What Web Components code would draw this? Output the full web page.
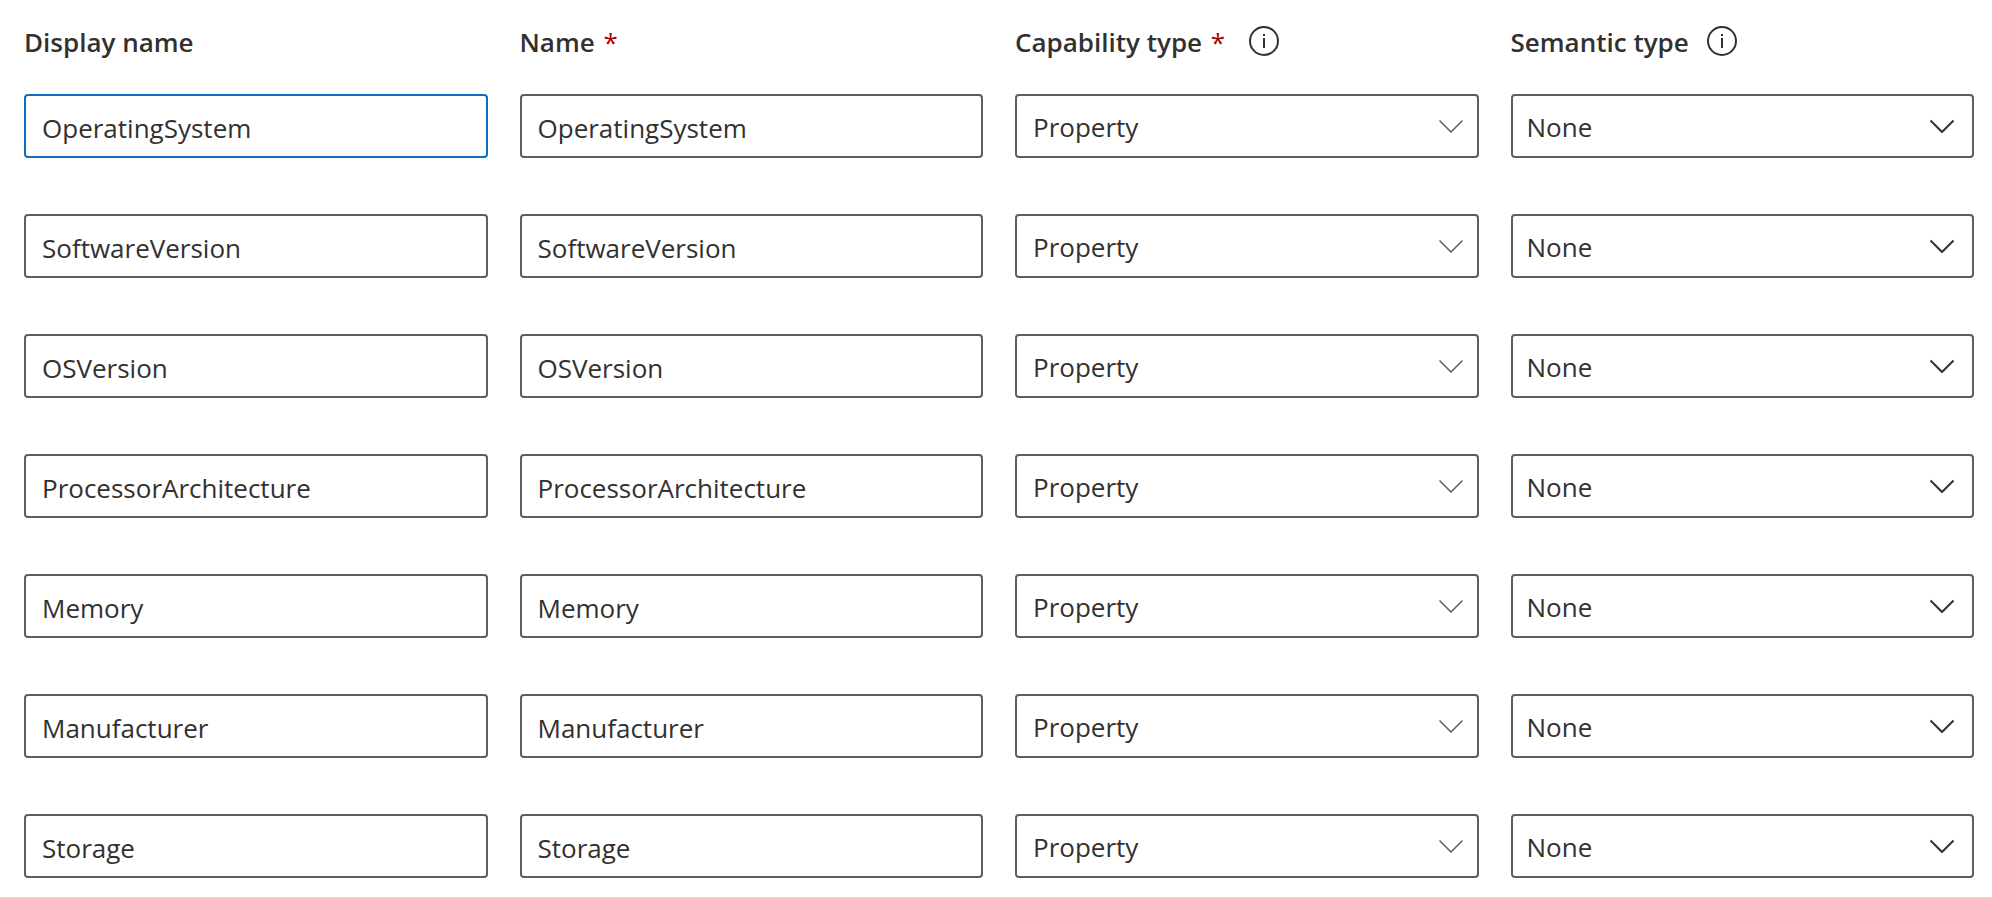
<!DOCTYPE html>
<html lang="en">
<head>
<meta charset="utf-8">
<title>Capabilities</title>
<style>
body { margin: 0; background: #fff; color: #323130; font-family: "Open Sans", "Noto Sans", sans-serif; font-size: 26px; line-height: 40px; }
</style>
</head>
<body>
<capability-list></capability-list>

<template id="heading-template">
<style>
:host { display: flex; align-items: center; gap: 18px; height: 42px; margin-bottom: 32px; white-space: nowrap; }
.text { padding-top: 2px; font-weight: 600; }
.star { display: none; padding: 0 6px 0 2px; color: #a80000; font-weight: 400; }
:host([required]) .star { display: inline; }
button { display: none; flex: none; width: 30px; height: 30px; padding: 0; border: 0; background: none; color: inherit; }
:host([info]) button { display: block; }
svg { display: block; }
</style>
<span class="text"><slot></slot><span class="star"> *</span></span>
<button type="button" aria-label="More information">
<svg width="30" height="30" viewBox="0 0 30 30" fill="none" stroke="currentColor" stroke-width="2"><circle cx="15" cy="15" r="14"/><path d="M15 12v10M15 8v2"/></svg>
</button>
</template>

<template id="text-template">
<style>
:host { display: block; min-width: 0; }
input { display: block; box-sizing: border-box; width: 100%; height: 64px; margin: 0; padding: 4px 16px 0; border: 2px solid #605e5c; border-radius: 4px; outline: none; background: #fff; color: inherit; font: inherit; }
:host([active]) input { border-color: #106ebe; }
</style>
<label><slot></slot><input type="text" spellcheck="false"></label>
</template>

<template id="select-template">
<style>
:host { display: block; min-width: 0; }
.box { display: grid; align-items: center; }
select, svg { grid-area: 1 / 1; }
select { appearance: none; box-sizing: border-box; width: 100%; height: 64px; margin: 0; padding: 2px 56px 0 16px; border: 2px solid #605e5c; border-radius: 4px; background: #fff; color: inherit; font: inherit; }
svg { justify-self: end; margin-right: 15px; pointer-events: none; color: #605e5c; }
:host([strong]) select { padding-left: 14px; }
:host([strong]) svg { margin-right: 19px; color: #323130; }
:host([strong]) path { stroke-width: 2; }
</style>
<label><slot></slot><span class="box"><select></select>
<svg width="26" height="14" viewBox="0 0 26 14" fill="none" stroke="currentColor" stroke-width="1.500"><path d="M1.500 1.500 13 13 24.500 1.500"/></svg></span></label>
</template>

<template id="list-template">
<style>
:host { display: block; padding: 20px 18px 19px 24px; }
form { display: grid; gap: 56px; }
.row { display: grid; grid-template-columns: repeat(4, minmax(0, 1fr)); gap: 32px; }
</style>
<form></form>
</template>

<script>
const stamp = (host, id) => {
  const root = host.attachShadow({ mode: 'open' });
  root.append(document.getElementById(id).content.cloneNode(true));
  return root;
};

customElements.define('field-heading', class extends HTMLElement {
  constructor() { super(); stamp(this, 'heading-template'); }
});

customElements.define('text-field', class extends HTMLElement {
  connectedCallback() {
    if (this.shadowRoot) return;
    const input = stamp(this, 'text-template').querySelector('input');
    input.value = this.getAttribute('value');
    input.setAttribute('aria-label', this.getAttribute('label'));
  }
});

customElements.define('select-field', class extends HTMLElement {
  connectedCallback() {
    if (this.shadowRoot) return;
    const select = stamp(this, 'select-template').querySelector('select');
    select.add(new Option(this.getAttribute('value')));
    select.setAttribute('aria-label', this.getAttribute('label'));
  }
});

customElements.define('capability-list', class extends HTMLElement {
  connectedCallback() {
    if (this.shadowRoot) return;
    const names = ['OperatingSystem', 'SoftwareVersion', 'OSVersion', 'ProcessorArchitecture', 'Memory', 'Manufacturer', 'Storage'];
    const columns = [
      { label: 'Display name', tag: 'text-field' },
      { label: 'Name', tag: 'text-field', flags: 'required' },
      { label: 'Capability type', tag: 'select-field', flags: 'required info', value: 'Property' },
      { label: 'Semantic type', tag: 'select-field', flags: 'info', value: 'None', look: 'strong' }
    ];
    stamp(this, 'list-template').querySelector('form').innerHTML = names.map((name, r) =>
      '<div class="row">' + columns.map((c, i) => {
        const heading = r ? '' : `<field-heading ${c.flags || ''}>${c.label}</field-heading>`;
        const look = (c.look || '') + (r === 0 && i === 0 ? ' active' : '');
        return `<${c.tag} label="${c.label}" value="${c.value || name}" ${look}>${heading}</${c.tag}>`;
      }).join('') + '</div>').join('');
  }
});
</script>
</body>
</html>
